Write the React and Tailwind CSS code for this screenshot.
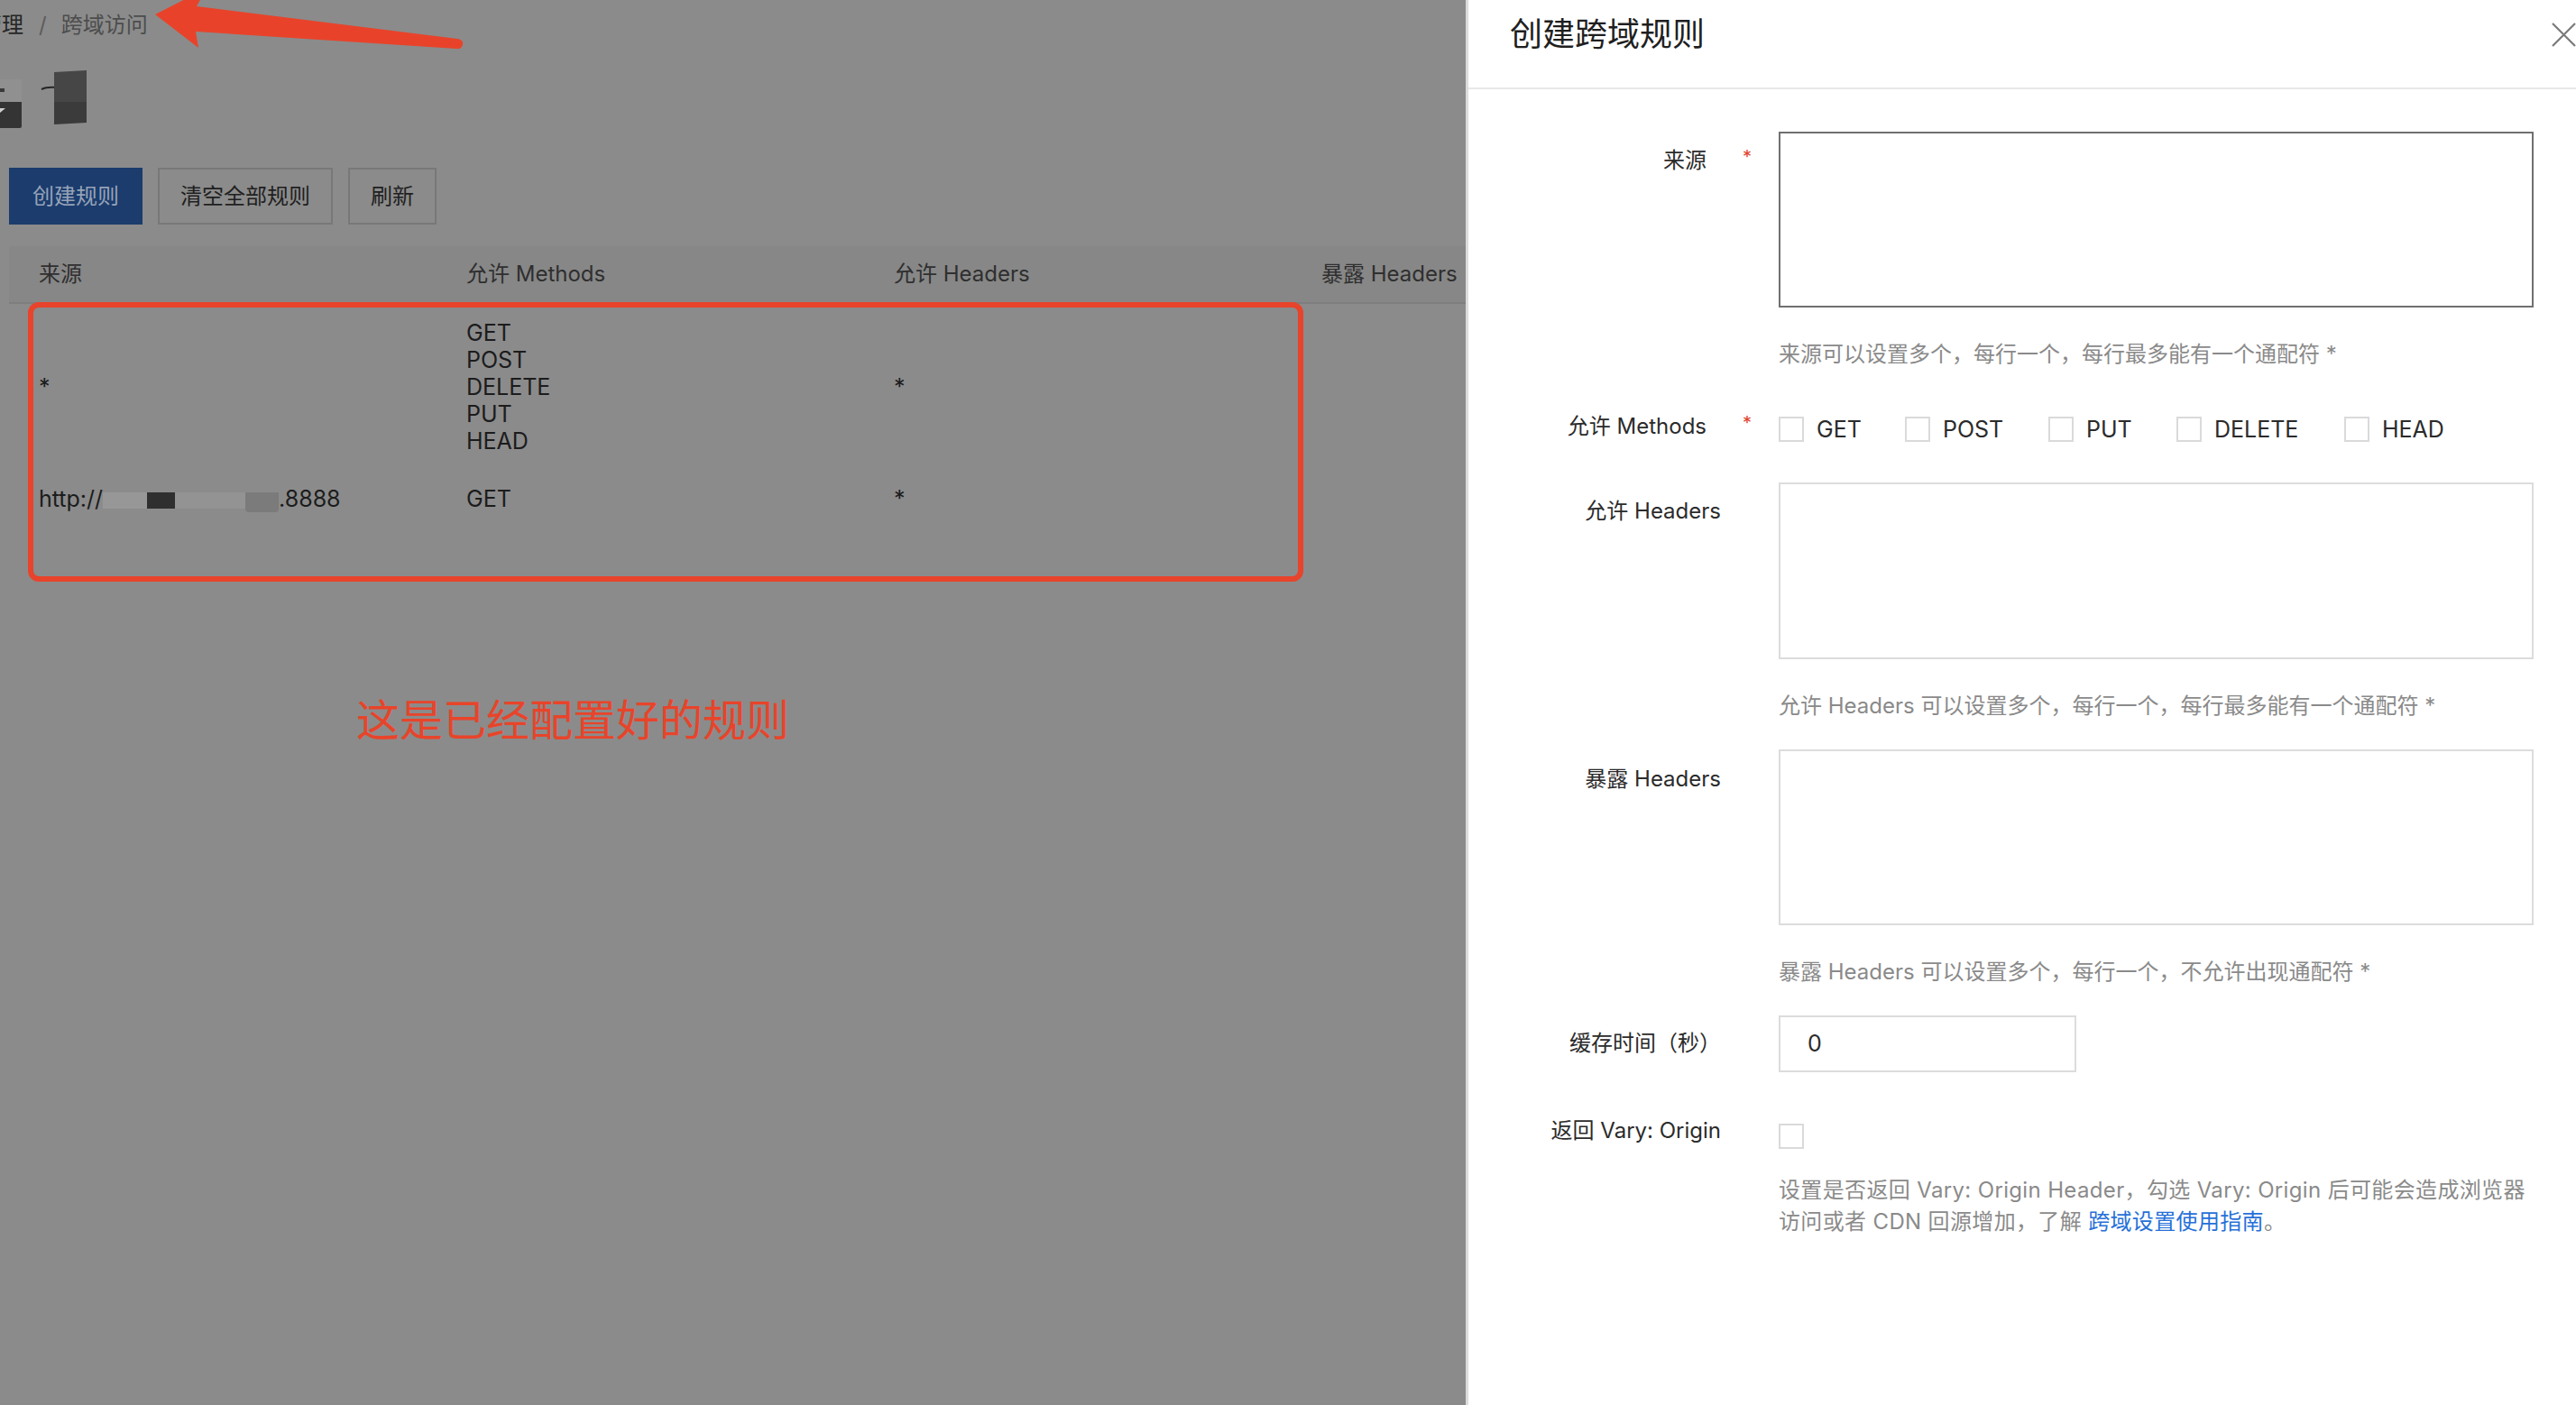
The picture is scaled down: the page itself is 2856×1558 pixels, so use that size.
import React from "react";

function FormRow({ label, required, pt, className, children }) {
  return (
    <div className={`flex ${className}`}>
      <div
        className={`${required ? "w-[264px]" : "w-[280px]"} shrink-0 text-right text-[24px] leading-[34px] text-[#2b2b2b] whitespace-nowrap ${pt}`}
      >
        {label}
      </div>
      <div className={`${required ? "w-[80px] pl-[40px]" : "w-[64px]"} shrink-0 text-[20px] leading-[34px] ${pt}`}>
        {required ? <span className="relative top-[-4px] text-[#e1412d]">*</span> : null}
      </div>
      <div className="w-[837px] shrink-0">{children}</div>
    </div>
  );
}

function Check() {
  return <div className="w-[28px] h-[28px] shrink-0 border-2 border-[#dadada] bg-white" />;
}

function Method({ name, w }) {
  return (
    <div className={`flex items-center shrink-0 ${w}`}>
      <Check />
      <span className="ml-[14px] text-[25px] leading-[34px] text-[#2b2b2b]">{name}</span>
    </div>
  );
}

function Help({ className, children }) {
  return <div className={`text-[24px] leading-[34px] text-[#8a8a8a] whitespace-nowrap ${className}`}>{children}</div>;
}

export default function App() {
  return (
    <div className="flex w-[2856px] h-[1558px] overflow-hidden font-['Inter','Noto_Sans_CJK_SC',sans-serif]">
      {/* Left: page under overlay */}
      <div className="relative w-[1625px] h-full shrink-0 overflow-hidden bg-[#8b8b8b]">
        {/* breadcrumb */}
        <div className="pt-[11px] text-[24px] leading-[34px] whitespace-nowrap">
          <span className="ml-[-22px] text-[#262626]">管理</span>
          <span className="ml-[17px] mr-[16px] text-[#5c5c5c]">/</span>
          <span className="text-[#4d4d4d]">跨域访问</span>
        </div>

        {/* redacted title */}
        <svg className="block mt-[33px]" width="100" height="66" viewBox="0 0 100 66">
          <rect x="0" y="10" width="24" height="25" fill="#909090" />
          <path d="M0 35 H24 V62 Q24 64 22 64 H0 Z" fill="#343434" />
          <path d="M0 42 L6 42 L0 47 Z" fill="#cfcfcf" />
          <rect x="0" y="20" width="5" height="4" fill="#3a3a3a" />
          <path d="M46 21 Q52 18 63 19" stroke="#262626" strokeWidth="2" fill="none" />
          <path d="M60 2 L96 0 L96 35 L60 35 Z" fill="#464646" />
          <path d="M60 35 L96 35 L96 58 L60 60 Z" fill="#3b3b3b" />
        </svg>

        {/* buttons */}
        <div className="flex gap-[17px] mt-[42px] ml-[10px] text-[24px]">
          <div className="w-[148px] h-[63px] flex items-center justify-center bg-[#1b3c6d] text-[#97a3b8]">创建规则</div>
          <div className="w-[194px] h-[63px] flex items-center justify-center border-2 border-[#787878] text-[#1f1f1f]">清空全部规则</div>
          <div className="w-[98px] h-[63px] flex items-center justify-center border-2 border-[#787878] text-[#1f1f1f]">刷新</div>
        </div>

        {/* table */}
        <div className="ml-[10px] mt-[24px] w-[1896px]">
          <div className="grid grid-cols-[474px_474px_474px_474px] h-[64px] items-center bg-[#878787] border-b-2 border-[#7e7e7e] text-[24px] text-[#2f2f2f] whitespace-nowrap">
            <div className="px-[33px]">来源</div>
            <div className="px-[33px]">允许 Methods</div>
            <div className="px-[33px]">允许 Headers</div>
            <div className="px-[33px]">暴露 Headers</div>
          </div>
          <div className="grid grid-cols-[474px_474px_474px_474px] items-center py-[17px] text-[25px] text-[#1c1c1c] leading-[30px]">
            <div className="px-[33px]">*</div>
            <div className="px-[33px]">
              <div>GET</div>
              <div>POST</div>
              <div>DELETE</div>
              <div>PUT</div>
              <div>HEAD</div>
            </div>
            <div className="px-[33px]">*</div>
            <div className="px-[33px]"></div>
          </div>
          <div className="grid grid-cols-[474px_474px_474px_474px] items-center py-[17px] text-[25px] text-[#1c1c1c] leading-[30px]">
            <div className="px-[33px] whitespace-nowrap">
              http://
              <span className="inline-block align-[-2px] w-[49px] h-[18px] bg-[#979797]" />
              <span className="inline-block align-[-2px] w-[31px] h-[18px] bg-[#2f2f2f]" />
              <span className="inline-block align-[-2px] w-[78px] h-[18px] bg-[#939393]" />
              <span className="inline-block align-[-6px] w-[37px] h-[22px] bg-[#7b7b7b] rounded-b-[4px]" />
              .8888
            </div>
            <div className="px-[33px]">GET</div>
            <div className="px-[33px]">*</div>
            <div className="px-[33px]"></div>
          </div>
        </div>

        {/* annotations */}
        <div className="absolute left-[31px] top-[335px] w-[1414px] h-[310px] border-[6px] border-[#e8432b] rounded-[12px]" />
        <div className="absolute left-[395px] top-[775px] text-[48px] leading-[48px] text-[#e8442a] whitespace-nowrap">
          这是已经配置好的规则
        </div>
        <svg className="absolute left-0 top-0" width="540" height="60" viewBox="0 0 540 60">
          <path
            d="M172 16 L229 -13 L218 7 L507 43 Q514 44 513 49 Q512 55 506 54 L217 35 L220 53 Z"
            fill="#e8432a"
          />
        </svg>
      </div>

      {/* Right: drawer */}
      <div className="w-[1231px] h-full shrink-0 bg-white border-l-[3px] border-[#dcdcdc] shadow-[-3px_0_0_#818181]">
        <div className="flex items-start h-[99px] border-b-2 border-[#e8e8e8] pt-[20px] pl-[46px]">
          <div className="text-[36px] leading-[37px] text-[#1f1f1f] whitespace-nowrap">创建跨域规则</div>
          <svg className="ml-auto mt-[5px]" width="27" height="27" viewBox="0 0 27 27">
            <path d="M1 1 L26 26 M26 1 L1 26" stroke="#7a7a7a" strokeWidth="2.2" fill="none" />
          </svg>
        </div>

        <div>
          <FormRow label="来源" required pt="pt-[15px]" className="mt-[47px]">
            <div className="h-[195px] border-2 border-[#707070]" />
            <Help className="mt-[35px]">来源可以设置多个，每行一个，每行最多能有一个通配符 *</Help>
          </FormRow>

          <FormRow label="允许 Methods" required pt="pt-0" className="mt-[46px]">
            <div className="flex items-center pt-[3px] h-[37px]">
              <Method name="GET" w="w-[140px]" />
              <Method name="POST" w="w-[159px]" />
              <Method name="PUT" w="w-[142px]" />
              <Method name="DELETE" w="w-[186px]" />
              <Method name="HEAD" w="w-[140px]" />
            </div>
          </FormRow>

          <FormRow label="允许 Headers" pt="pt-[15px]" className="mt-[42px]">
            <div className="h-[196px] border-2 border-[#dcdcdc]" />
            <Help className="mt-[35px]">允许 Headers 可以设置多个，每行一个，每行最多能有一个通配符 *</Help>
          </FormRow>

          <FormRow label="暴露 Headers" pt="pt-[16px]" className="mt-[31px]">
            <div className="h-[195px] border-2 border-[#dcdcdc]" />
            <Help className="mt-[35px]">暴露 Headers 可以设置多个，每行一个，不允许出现通配符 *</Help>
          </FormRow>

          <FormRow label="缓存时间（秒）" pt="pt-[14px]" className="mt-[31px]">
            <div className="w-[330px] h-[63px] border-2 border-[#dcdcdc] flex items-center pl-[30px] text-[25px] text-[#2b2b2b]">
              0
            </div>
          </FormRow>

          <FormRow label="返回 Vary: Origin" pt="pt-0" className="mt-[48px]">
            <div className="mt-[9px]">
              <Check />
            </div>
            <div className="mt-[28px] text-[24px] leading-[35px] text-[#8a8a8a] tracking-[0.35px]">
              <div className="whitespace-nowrap">设置是否返回 Vary: Origin Header，勾选 Vary: Origin 后可能会造成浏览器</div>
              <div className="whitespace-nowrap">
                访问或者 CDN 回源增加，了解 <span className="text-[#2670d8]">跨域设置使用指南</span>。
              </div>
            </div>
          </FormRow>
        </div>
      </div>
    </div>
  );
}
